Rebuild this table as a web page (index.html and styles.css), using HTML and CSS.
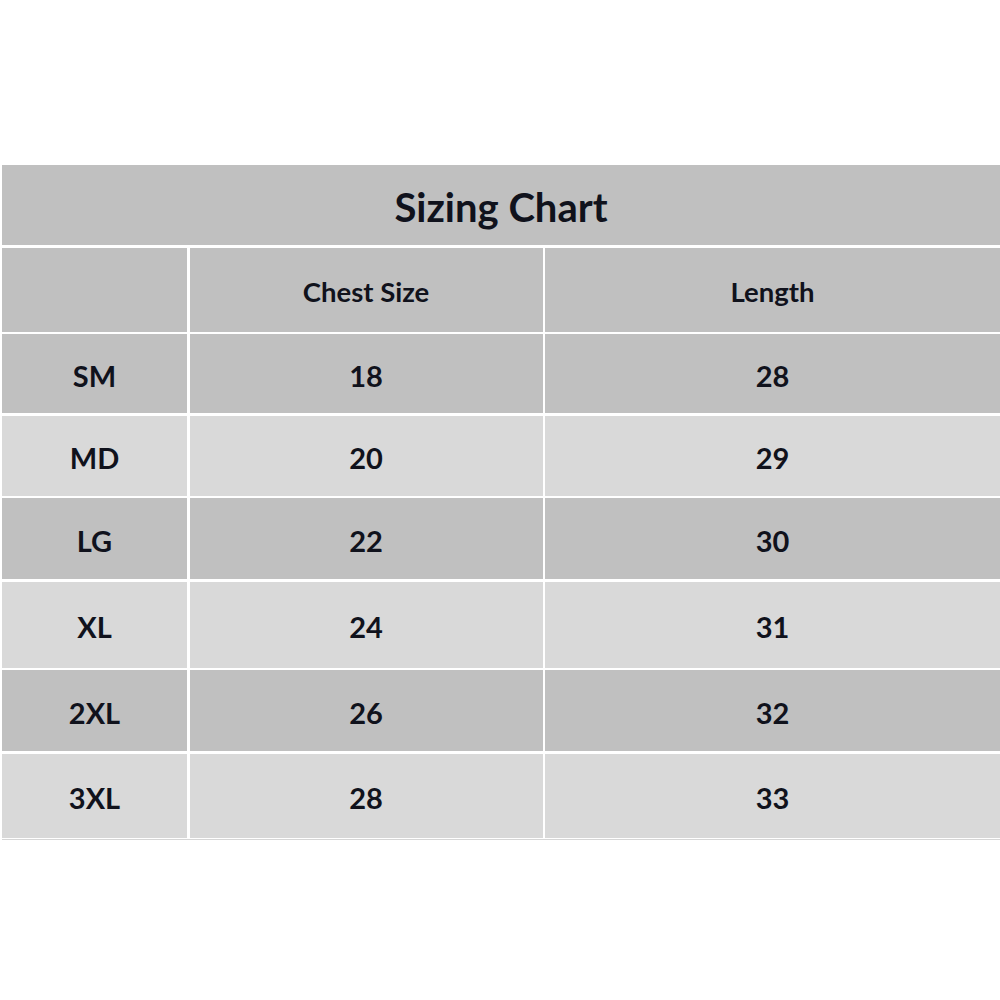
FILE: index.html
```html
<!DOCTYPE html>
<html>
<head>
<meta charset="utf-8">
<link rel="stylesheet" href="styles.css">
</head>
<body>
<div class="chart">
  <div class="cell title r-title">Sizing Chart</div>
  <div class="cell dark r-head"></div>
  <div class="cell dark r-head">Chest Size</div>
  <div class="cell dark r-head">Length</div>

  <div class="cell dark r1 big">SM</div>
  <div class="cell dark r1 big">18</div>
  <div class="cell dark r1 big">28</div>

  <div class="cell light big">MD</div>
  <div class="cell light big">20</div>
  <div class="cell light big">29</div>

  <div class="cell dark big">LG</div>
  <div class="cell dark big">22</div>
  <div class="cell dark big">30</div>

  <div class="cell light big">XL</div>
  <div class="cell light big">24</div>
  <div class="cell light big">31</div>

  <div class="cell dark big">2XL</div>
  <div class="cell dark big">26</div>
  <div class="cell dark big">32</div>

  <div class="cell light big">3XL</div>
  <div class="cell light big">28</div>
  <div class="cell light big">33</div>
</div>
<div class="underline"></div>
</body>
</html>
```
FILE: styles.css
```css
html, body {
  margin: 0;
  padding: 0;
  background: #ffffff;
}
body {
  font-family: Lato, "Open Sans", "Liberation Sans", sans-serif;
  color: #10121c;
}
.chart {
  margin: 165px 0 0 2px;
  display: grid;
  grid-template-columns: 185px 353px 1fr;
  grid-template-rows: 80px 84px 79px 80px 81px 86px 81px 84px;
  column-gap: 2.5px;
  row-gap: 2.5px;
}
.cell {
  display: flex;
  align-items: center;
  justify-content: center;
  font-weight: 700;
  font-size: 24px;
}
.dark {
  background: #c0c0c0;
}
.light {
  background: #d9d9d9;
}
.title {
  grid-column: 1 / 4;
  background: #c0c0c0;
  font-size: 40px;
  padding-top: 4px;
  box-sizing: border-box;
}
.r-head {
  font-size: 27.5px;
  padding-top: 4px;
  box-sizing: border-box;
}
.big {
  font-size: 29px;
  padding-top: 4px;
  box-sizing: border-box;
}
.underline {
  margin: 1px 0 0 2px;
  height: 1px;
  background: #d6d6d6;
}
```
